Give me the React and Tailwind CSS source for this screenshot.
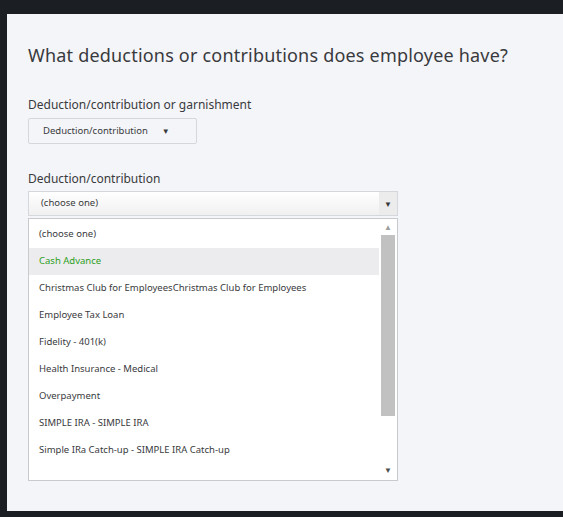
export default function App() {
  const items = [
    '(choose one)',
    'Cash Advance',
    'Christmas Club for EmployeesChristmas Club for Employees',
    'Employee Tax Loan',
    'Fidelity - 401(k)',
    'Health Insurance - Medical',
    'Overpayment',
    'SIMPLE IRA - SIMPLE IRA',
    'Simple IRa Catch-up - SIMPLE IRA Catch-up',
    'Vanguard - 401(k) Catch-up',
  ];
  return (
    <div className="w-[563px] h-[517px] bg-[#1b1e22] pt-[14px] pl-[7px] pb-[6px]" style={{ fontFamily: '"Noto Sans", sans-serif' }}>
      <div className="h-full bg-[#f4f5f8] pl-[21px] pt-[27px]">
        <h1 className="text-[18px] text-[#393a3d] leading-[28px] tracking-[0.2px]">What deductions or contributions does employee have?</h1>
        <div className="mt-[27px] text-[12px] text-[#393a3d] leading-[18px]">Deduction/contribution or garnishment</div>
        <div className="mt-[4px] w-[169px] h-[26px] border border-[#d4d7dc] bg-[#f4f5f8] rounded-[2px] flex items-center pl-[14px] text-[9.5px] text-[#393a3d]">
          Deduction/contribution
          <span className="ml-[14px] text-[8px]">▼</span>
        </div>
        <div className="mt-[26px] text-[12px] text-[#393a3d] leading-[18px]">Deduction/contribution</div>
        <div className="mt-[3px] w-[370px] h-[25px] border border-[#d4d7dc] bg-gradient-to-b from-white to-[#f0f0f0] flex items-center text-[9.5px] text-[#393a3d]">
          <span className="flex-1 pl-[12px]">(choose one)</span>
          <span className="w-[18px] h-full bg-[#ececec] flex items-center justify-center text-[8px]">▼</span>
        </div>
        <div className="mt-[2px] w-[370px] h-[263px] border border-[#c8cacd] bg-white flex overflow-hidden">
          <div className="flex-1 overflow-hidden">
            <div className="h-[2px]" />
            {items.map((t, i) => (
              <div key={t} className={`h-[27px] flex items-center pl-[10px] text-[9.5px] whitespace-nowrap ${i === 1 ? 'bg-[#ececee] text-[#2ca01c]' : 'text-[#393a3d]'} ${i === items.length - 1 ? 'h-[20px] items-end' : ''}`}>
                {t}
              </div>
            ))}
          </div>
          <div className="w-[18px] flex flex-col items-center bg-white">
            <span className="text-[8px] text-[#a0a0a0] h-[16px] flex items-center">▲</span>
            <div className="w-[14px] h-[181px] bg-[#c1c1c1]" />
            <div className="flex-1" />
            <span className="text-[8px] text-[#505050] h-[20px] flex items-center">▼</span>
          </div>
        </div>
      </div>
    </div>
  );
}
